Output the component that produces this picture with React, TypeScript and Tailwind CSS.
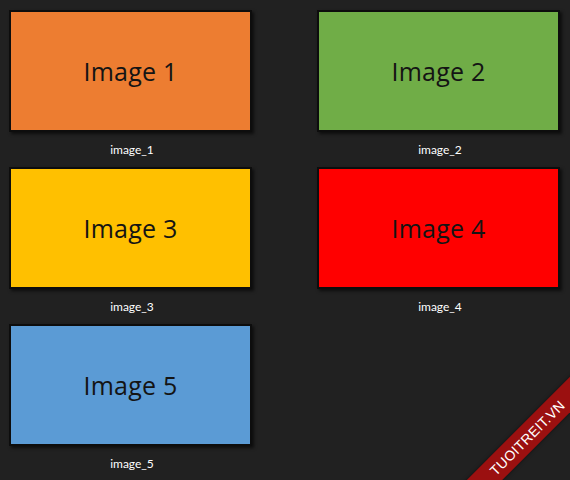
import React from "react";

const items = [
  { n: 1, bg: "bg-[#ED7D31]" },
  { n: 2, bg: "bg-[#70AD47]" },
  { n: 3, bg: "bg-[#FFC000]" },
  { n: 4, bg: "bg-[#FF0000]" },
  { n: 5, bg: "bg-[#5B9BD5]" },
];

export default function App() {
  return (
    <div className="relative w-[570px] h-[480px] overflow-hidden bg-[#212121]">
      <div className="grid grid-cols-[243px_243px] gap-x-[65px] pl-[9px] pt-[10px]">
        {items.map((it) => (
          <div key={it.n} className="flex flex-col items-center h-[157px]">
            <div
              className={`w-[243px] h-[122px] border-2 border-[#0d0d0d] ${it.bg} flex items-center justify-center shadow-[2px_2px_3px_rgba(0,0,0,0.6)]`}
            >
              <span
                className="text-[25px] leading-none text-[#141414] tracking-[0.2px]"
                style={{ fontFamily: '"Open Sans", "Noto Sans", sans-serif' }}
              >
                Image {it.n}
              </span>
            </div>
            <div
              className="mt-[10px] pl-[3px] text-[12px] leading-[16px] text-white"
              style={{ fontFamily: '"Lato", "Open Sans", sans-serif' }}
            >
              image_{it.n}
            </div>
          </div>
        ))}
      </div>
      <div className="absolute left-[432px] top-[425px] w-[190px] h-[25px] bg-[#9b1010] rotate-[-45deg] flex items-center justify-center shadow-[0_0_4px_rgba(0,0,0,0.5)]">
        <span
          className="text-[14px] leading-none text-white tracking-[0.3px]"
          style={{ fontFamily: '"Liberation Sans", Arial, sans-serif' }}
        >
          TUOITREIT.VN
        </span>
      </div>
    </div>
  );
}
